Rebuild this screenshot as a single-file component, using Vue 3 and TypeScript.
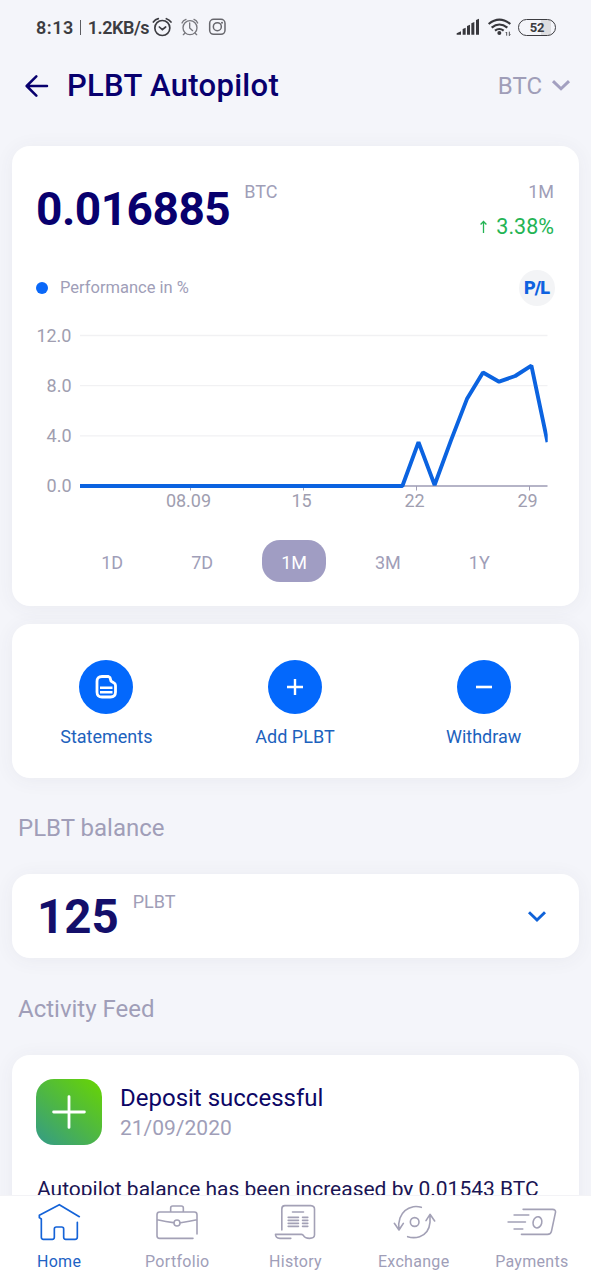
<script setup lang="ts">
interface AxisLabel {
  text: string
  pos: number
}

const yLabels: AxisLabel[] = [
  { text: '12.0', pos: 15.5 },
  { text: '8.0', pos: 65.2 },
  { text: '4.0', pos: 115.2 },
  { text: '0.0', pos: 166 },
]

const xLabels: AxisLabel[] = [
  { text: '08.09', pos: 178.5 },
  { text: '15', pos: 291.5 },
  { text: '22', pos: 404.5 },
  { text: '29', pos: 517.5 },
]

const gridLines: number[] = [15.5, 65.7, 115.8]

const chartLeft = 68
const chartStep = 16.12
const baseY = 166
const unit = 12.54

const values: number[] = [
  ...Array(21).fill(0),
  3.5, 0.08, 3.6, 6.93, 9.05, 8.32, 8.77, 9.6, 3.5,
]

const linePoints: string = values
  .map((v, i) => `${(chartLeft + i * chartStep).toFixed(1)},${(baseY - v * unit).toFixed(1)}`)
  .join(' ')

const periods: string[] = ['1D', '7D', '1M', '3M', '1Y']
const activePeriod = '1M'
</script>

<template>
  <div class="screen">
    <div class="status">
      <div class="status-left">
        <span class="clock">8:13</span>
        <span class="divider"></span>
        <span class="speed">1.2KB/s</span>
        <svg class="status-icons" width="77" height="24" viewBox="453 45 231 72">
          <g fill="none" stroke="#3c3c41" stroke-width="5" stroke-linecap="round">
            <circle cx="487" cy="84" r="22.5" />
            <path d="M478 81l9 8 10-8" />
            <path d="M460 66q6-8 15-10M499 56q9 3 14 10" />
          </g>
          <g fill="none" stroke="#77777d" stroke-width="4" stroke-linecap="round">
            <circle cx="570" cy="83" r="21" />
            <path d="M569 69v15l9 8M546 69q3-8 12-11M582 58q8 3 11 11M555 99l-5 5M585 99l5 5" />
          </g>
          <g fill="none" stroke="#67676d" stroke-width="4.5">
            <rect x="629" y="58" width="46" height="45" rx="12" />
            <circle cx="652" cy="80" r="12" />
          </g>
          <circle cx="666" cy="68" r="3" fill="#67676d" />
        </svg>
      </div>
      <div class="status-right">
        <svg width="56" height="20" viewBox="480 51 168 60">
          <g fill="#37373c">
            <path d="M482 104v-4l13-6v10zM500 104V87l9-4v21zM513 104V78l9-4v30zM526 104V70l9-4v38zM540 104V60l9-4v48z" />
            <circle cx="610" cy="99" r="6" />
          </g>
          <g fill="none" stroke="#37373c" stroke-width="6.5">
            <path d="M578 72q32-26 65 0M587 83q23-19 47 0M597 92q13-10 26 0" />
          </g>
          <path d="M632 96v11M629 99l3-3M640 95v12M643 103l-3 4" fill="none" stroke="#55555a" stroke-width="3" />
        </svg>
        <span class="battery">52</span>
      </div>
    </div>

    <header class="header">
      <svg class="back" width="24" height="24" viewBox="75 222 72 72">
        <path d="M109 229L80 258l29 29M81 258h60" fill="none" stroke="#08006e" stroke-width="7.5" stroke-linecap="round" stroke-linejoin="round" />
      </svg>
      <h1>PLBT Autopilot</h1>
      <span class="currency">BTC</span>
      <svg width="20" height="14" viewBox="0 0 20 14">
        <path d="M2 2.200l8 7.600 8-7.600" fill="none" stroke="#a3a0c0" stroke-width="3" />
      </svg>
    </header>

    <section class="card performance">
      <div class="summary">
        <div class="amount"><strong>0.016885</strong><sup class="amount-unit">BTC</sup></div>
        <div class="change">
          <span class="change-period">1M</span>
          <span class="change-value">
            <svg width="9" height="14" viewBox="0 0 9 14">
              <path d="M4.500 13V1.500M1.600 4.500l2.900-3L7.400 4.500" fill="none" stroke="#24b454" stroke-width="1.300" />
            </svg>
            <span>3.38%</span>
          </span>
        </div>
      </div>

      <div class="legend">
        <span class="dot"></span>
        <span class="legend-text">Performance in %</span>
        <span class="pl">P/L</span>
      </div>

      <svg class="chart" width="567" height="200" viewBox="0 0 567 200">
        <g stroke="#f1f1f3" stroke-width="1.300">
          <line v-for="y in gridLines" :key="y" x1="68" x2="535.500" :y1="y" :y2="y" />
        </g>
        <path d="M68 166H535.500" stroke="#9d9bb4" stroke-width="1.600" />
        <g stroke="#a09eb4" stroke-width="1">
          <line v-for="l in xLabels" :key="l.text" :x1="l.pos" :x2="l.pos" y1="166" y2="170.500" />
        </g>
        <g class="axis" text-anchor="end">
          <text v-for="l in yLabels" :key="l.text" x="59.500" :y="l.pos + 6.300">{{ l.text }}</text>
        </g>
        <g class="axis" text-anchor="middle">
          <text v-for="l in xLabels" :key="l.text" :x="l.pos - 2" y="187">{{ l.text }}</text>
        </g>
        <clipPath id="plot"><rect x="68" y="0" width="467.700" height="175" /></clipPath>
        <polyline :points="linePoints" clip-path="url(#plot)" fill="none" stroke="#0b63e0" stroke-width="3.900" stroke-linejoin="bevel" />
      </svg>

      <div class="tabs">
        <span v-for="p in periods" :key="p" class="tab" :class="{ active: p === activePeriod }">{{ p }}</span>
      </div>
    </section>

    <section class="card actions">
      <div class="action">
        <span class="round">
          <svg width="24" height="26" viewBox="0 0 24 26" fill="none" stroke="#fff" stroke-width="2.800" stroke-linejoin="round">
            <path d="M8 2.500h6.500l1.500 1.200 1 3.300 3.500 2.300q1 .9 1 2.200V18q0 5-5 5H8q-5 0-5-5V7.500q0-5 5-5z" />
            <path d="M6 13.800h12.500M6 18.300h12.500" stroke-width="2.500" />
          </svg>
        </span>
        <span class="action-label">Statements</span>
      </div>
      <div class="action">
        <span class="round">
          <svg width="18" height="18" viewBox="0 0 18 18" fill="none" stroke="#fff" stroke-width="2.400">
            <path d="M1 9h16M9 1v16" />
          </svg>
        </span>
        <span class="action-label">Add PLBT</span>
      </div>
      <div class="action">
        <span class="round">
          <svg width="18" height="18" viewBox="0 0 18 18" fill="none" stroke="#fff" stroke-width="2.600">
            <path d="M1 9h16" />
          </svg>
        </span>
        <span class="action-label">Withdraw</span>
      </div>
    </section>

    <h2 class="section-title balance-title">PLBT balance</h2>

    <section class="card balance">
      <div class="balance-amount"><strong>125</strong><sup class="balance-unit">PLBT</sup></div>
      <svg width="20" height="14" viewBox="0 0 20 14">
        <path d="M2 3.300l8 7.700 8-7.700" fill="none" stroke="#0f62d8" stroke-width="2.900" />
      </svg>
    </section>

    <h2 class="section-title feed-title">Activity Feed</h2>

    <section class="card feed">
      <div class="feed-head">
        <span class="feed-icon">
          <svg width="34" height="34" viewBox="0 0 34 34" fill="none" stroke="#fff" stroke-width="2.800" stroke-linecap="round">
            <path d="M1.600 17h30.800M17 1.600v30.800" />
          </svg>
        </span>
        <div class="feed-info">
          <span class="feed-name">Deposit successful</span>
          <span class="feed-date">21/09/2020</span>
        </div>
      </div>
      <p class="feed-text">Autopilot balance has been increased by 0.01543 BTC</p>
    </section>

    <nav class="nav">
      <div class="nav-item current">
        <svg width="50" height="42" viewBox="102 60 150 126">
          <path d="M238 110L178 74 118 106v7l6 4v55q0 6 6 6h27q6 0 6-6v-25q0-6 6-6h16q6 0 6 6v25q0 6 6 6h28q7 0 7-7v-44" />
        </svg>
        <span>Home</span>
      </div>
      <div class="nav-item">
        <svg width="50" height="42" viewBox="457 60 150 126">
          <path d="M580 175H480q-8 0-8-8v-63q0-8 8-8h104q8 0 8 8v58M513 94V84q0-6 6-6h26q6 0 6 6v10M473 119q27 6 48 9M543 128q27-4 49-9" />
          <circle cx="532" cy="129" r="9" />
        </svg>
        <span>Portfolio</span>
      </div>
      <div class="nav-item">
        <svg width="50" height="42" viewBox="811.5 60 150 126">
          <path d="M847 150V87q0-10 9-10h78q11 1 11 10v78q0 10-15 10-14 0-18-8-2-4-6-4h-78q0 12 13 12h33M879 96h33M866 112h31M866 121h31M866 130h31M866 139h31M909 112h16M909 121h16M909 130h16M909 139h16" />
        </svg>
        <span>History</span>
      </div>
      <div class="nav-item">
        <svg width="50" height="42" viewBox="279 60 150 126">
          <path d="M309 149q-3-18 3-35 10-28 40-34 12-2 24 2M295 130l14 20 13-20M335 170q18 6 36 0 28-10 31-43v-22M390 122l12-19 14 20" />
          <circle cx="356" cy="126" r="13" />
        </svg>
        <span>Exchange</span>
      </div>
      <div class="nav-item">
        <svg width="50" height="42" viewBox="635.7 60 150 126">
          <path d="M684 88h88q11 0 9 10l-12 56q-2 9-12 9h-78M657 105h44M639 126h52M657 147h26" />
          <ellipse cx="727" cy="127" rx="13" ry="17" transform="rotate(15 727 127)" />
        </svg>
        <span>Payments</span>
      </div>
    </nav>
  </div>
</template>

<style>
body {
  margin: 0;
  background: #f4f5fa;
}
</style>

<style scoped>
.screen {
  width: 591px;
  height: 1280px;
  overflow: hidden;
  display: flex;
  flex-direction: column;
  background: #f4f5fa;
  font-family: Roboto, "Liberation Sans", sans-serif;
  color: #a09eb8;
}

.screen svg {
  display: block;
  flex: none;
}

.screen span,
.screen strong,
.screen sup,
.screen h1 {
  white-space: nowrap;
}

.status {
  flex: none;
  height: 54px;
  padding: 0 35px 0 36px;
  display: flex;
  align-items: center;
  justify-content: space-between;
  color: #3c3c41;
}

.status-left,
.status-right {
  display: flex;
  align-items: center;
}

.clock,
.speed {
  font-size: 18px;
  font-weight: 600;
  line-height: 25px;
  padding-top: 1px;
}

.clock {
  letter-spacing: 0.5px;
}

.speed {
  letter-spacing: -0.480px;
}

.divider {
  width: 1px;
  height: 15px;
  margin: 1px 7px 0 6px;
  background: #5c5c61;
}

.status-icons {
  margin-left: 2px;
}

.status-right {
  gap: 6px;
}

.battery {
  box-sizing: border-box;
  width: 38px;
  height: 17px;
  border: 1.500px solid #3c3c41;
  border-radius: 9px;
  background: linear-gradient(90deg, #f4f5fa 60%, #dddde0 60%, #dddde0 88%, #f4f5fa 88%);
  font-size: 13px;
  font-weight: 700;
  line-height: 15.500px;
  letter-spacing: -0.200px;
  text-align: center;
}

.header {
  flex: none;
  height: 64px;
  padding: 0 20px 0 25px;
  margin-bottom: 28px;
  display: flex;
  align-items: center;
}

.header h1 {
  margin: 0 auto 0 18px;
  font-size: 31px;
  font-weight: 500;
  line-height: 40px;
  letter-spacing: 0.3px;
  color: #08006e;
}

.currency {
  margin-right: 9px;
  font-size: 24px;
  line-height: 30px;
}

.card {
  flex: none;
  box-sizing: border-box;
  margin: 0 12px;
  border-radius: 18px;
  background: #fff;
  box-shadow: 0 2px 20px rgba(60, 60, 90, 0.06);
}

.performance {
  height: 460px;
  display: flex;
  flex-direction: column;
}

.summary {
  height: 123px;
  padding: 31px 25px 0 24px;
  box-sizing: border-box;
  display: flex;
  justify-content: space-between;
}

.amount {
  display: flex;
}

.amount strong {
  font-size: 46px;
  font-weight: 700;
  line-height: 64px;
  letter-spacing: -0.480px;
  color: #08006e;
}

.amount-unit {
  margin-left: 14px;
  font-size: 18px;
  line-height: 30px;
  vertical-align: baseline;
}

.change {
  display: flex;
  flex-direction: column;
  align-items: flex-end;
}

.change-period {
  font-size: 18px;
  line-height: 30px;
}

.change-value {
  display: flex;
  align-items: center;
  gap: 8px;
  font-size: 21.500px;
  line-height: 39px;
  color: #24b454;
}

.legend {
  height: 37px;
  padding: 0 24px;
  display: flex;
  align-items: center;
}

.dot {
  width: 12px;
  height: 12px;
  border-radius: 50%;
  background: #0a68f8;
}

.legend-text {
  margin: 0 auto 0 12px;
  font-size: 16.500px;
  line-height: 24px;
}

.pl {
  width: 36px;
  height: 36px;
  border-radius: 50%;
  background: #f3f4f6;
  font-size: 18px;
  font-weight: 900;
  line-height: 36px;
  letter-spacing: -1px;
  text-indent: -1px;
  text-align: center;
  color: #0f62e0;
}

.chart {
  margin-top: 14px;
}

.axis {
  font-size: 18px;
  fill: #a09eb0;
}

.tabs {
  height: 42px;
  margin-top: 20px;
  display: flex;
  justify-content: center;
  gap: 30px;
}

.tab {
  padding: 0 19px;
  border-radius: 18px;
  font-size: 18px;
  line-height: 46px;
  height: 42px;
}

.tab.active {
  background: #a09dc3;
  color: #fff;
}

.actions {
  height: 154px;
  margin-top: 18px;
  padding: 36px 1px 0 0;
  display: grid;
  grid-template-columns: repeat(3, 1fr);
}

.action {
  display: flex;
  flex-direction: column;
  align-items: center;
  gap: 11px;
}

.round {
  width: 54px;
  height: 54px;
  display: flex;
  align-items: center;
  justify-content: center;
  border-radius: 50%;
  background: #0368fc;
}

.action-label {
  font-size: 18px;
  line-height: 24px;
  color: #1d62bd;
}

.section-title {
  flex: none;
  margin: 0 18px;
  font-size: 24px;
  font-weight: 400;
  line-height: 30px;
}

.balance-title {
  margin-top: 35px;
  margin-bottom: 31px;
}

.balance {
  height: 84px;
  padding: 0 32px 0 25px;
  display: flex;
  align-items: center;
  justify-content: space-between;
}

.balance-amount {
  display: flex;
}

.balance-amount strong {
  height: 84px;
  font-size: 47.500px;
  font-weight: 700;
  line-height: 87px;
  color: #140f6a;
}

.balance-unit {
  margin-left: 14px;
  padding-top: 13px;
  font-size: 18px;
  line-height: 30px;
  vertical-align: baseline;
}

.feed-title {
  margin-top: 36px;
  margin-bottom: 31px;
}

.feed {
  height: 260px;
  padding: 24px 24px 0;
}

.feed-head {
  display: flex;
}

.feed-icon {
  width: 66px;
  height: 66px;
  display: flex;
  align-items: center;
  justify-content: center;
  border-radius: 18px;
  background: linear-gradient(40deg, #349b88 0%, #4cb548 45%, #66d208 95%);
}

.feed-info {
  margin-left: 18px;
  padding-top: 3px;
  display: flex;
  flex-direction: column;
}

.feed-name {
  font-size: 24px;
  line-height: 32px;
  color: #0d0766;
}

.feed-date {
  font-size: 21px;
  line-height: 28px;
}

.feed-text {
  margin: 29px 0 0 1px;
  font-size: 21px;
  line-height: 30px;
  white-space: nowrap;
  color: #1b1554;
}

.nav {
  position: fixed;
  left: 0;
  top: 1195px;
  width: 591px;
  height: 85px;
  box-sizing: border-box;
  border-top: 1px solid #f3f3f6;
  padding-top: 4px;
  display: grid;
  grid-template-columns: repeat(5, 1fr);
  background: #fff;
}

.nav-item {
  display: flex;
  flex-direction: column;
  align-items: center;
  gap: 9px;
  font-size: 16px;
  line-height: 22px;
  letter-spacing: 0.300px;
}

.nav-item svg {
  fill: none;
  stroke: #a3a1b6;
  stroke-width: 4.800;
  stroke-linecap: round;
  stroke-linejoin: round;
}

.nav-item.current {
  color: #1d62c4;
}

.nav-item.current svg {
  stroke: #1463d8;
  stroke-width: 5;
}
</style>
